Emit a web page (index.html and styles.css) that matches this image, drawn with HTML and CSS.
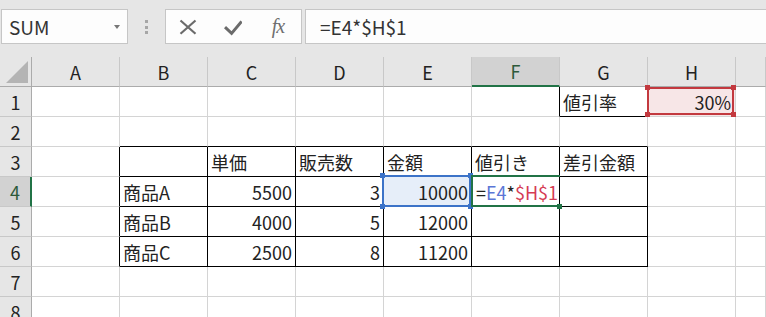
FILE: index.html
```html
<!DOCTYPE html>
<html lang="ja">
<head>
<meta charset="utf-8">
<title>Excel</title>
<link rel="stylesheet" href="styles.css">
</head>
<body>
<div class="toolbar">
  <div class="namebox"><span>SUM</span><span class="caret"></span></div>
  <div class="grip"><i></i><i></i><i></i></div>
  <div class="fxbox">
    <span class="ic"><svg width="18" height="18" viewBox="0 0 18 18"><path d="M1.5 2.5 L16.5 15.8 M16.5 2.5 L1.5 15.8" stroke="#6b6b6b" stroke-width="2.2" fill="none"/></svg></span>
    <span class="ic"><svg width="18" height="18" viewBox="0 0 18 18"><path d="M1 9.2 L7.6 15.4 L17.6 3.4" stroke="#6b6b6b" stroke-width="3" fill="none"/></svg></span>
    <span class="ic fx">fx</span>
  </div>
  <div class="formula">=E4*$H$1</div>
</div>
<div class="sheet">
  <div class="c corner"><svg width="22" height="22" viewBox="0 0 22 22"><polygon points="22,0 22,22 0,22" fill="#b4b4b4"/></svg></div>
  <div class="c ch">A</div><div class="c ch">B</div><div class="c ch">C</div><div class="c ch">D</div><div class="c ch">E</div><div class="c ch act">F</div><div class="c ch">G</div><div class="c ch">H</div><div class="c ch"></div>

  <div class="c rh">1</div>
  <div class="c"></div><div class="c"></div><div class="c"></div><div class="c"></div><div class="c"></div><div class="c tl"></div><div class="c tt">値引率</div>
  <div class="c r hl-red">30%<span class="selH"><i class="q1"></i><i class="q2"></i><i class="q3"></i><i class="q4"></i></span></div><div class="c"></div>

  <div class="c rh">2</div>
  <div class="c"></div><div class="c tt"></div><div class="c tt"></div><div class="c tt"></div><div class="c tt"></div><div class="c tt"></div><div class="c tt"></div><div class="c"></div><div class="c"></div>

  <div class="c rh">3</div>
  <div class="c tl"></div><div class="c t"></div><div class="c t">単価</div><div class="c t">販売数</div><div class="c t">金額</div><div class="c t">値引き</div><div class="c t">差引金額</div><div class="c"></div><div class="c"></div>

  <div class="c rh act">4</div>
  <div class="c tl"></div><div class="c t">商品A</div><div class="c t r">5500</div><div class="c t r">3</div>
  <div class="c t r hl-blue">10000<span class="selE"><i class="q1"></i><i class="q2"></i><i class="q3"></i><i class="q4"></i></span></div>
  <div class="c t edit">=<span class="ref-b">E4</span>*<span class="ref-r">$H$1</span><span class="selF"><i class="qh"></i></span></div>
  <div class="c t"></div><div class="c"></div><div class="c"></div>

  <div class="c rh">5</div>
  <div class="c tl"></div><div class="c t">商品B</div><div class="c t r">4000</div><div class="c t r">5</div><div class="c t r">12000</div><div class="c t"></div><div class="c t"></div><div class="c"></div><div class="c"></div>

  <div class="c rh">6</div>
  <div class="c tl"></div><div class="c t">商品C</div><div class="c t r">2500</div><div class="c t r">8</div><div class="c t r">11200</div><div class="c t"></div><div class="c t"></div><div class="c"></div><div class="c"></div>

  <div class="c rh">7</div>
  <div class="c"></div><div class="c"></div><div class="c"></div><div class="c"></div><div class="c"></div><div class="c"></div><div class="c"></div><div class="c"></div><div class="c"></div>

  <div class="c rh">8</div>
  <div class="c"></div><div class="c"></div><div class="c"></div><div class="c"></div><div class="c"></div><div class="c"></div><div class="c"></div><div class="c"></div><div class="c"></div>
</div>
</body>
</html>
```
FILE: styles.css
```css
* { box-sizing: border-box; }
html, body { margin: 0; height: 100%; overflow: hidden; }
body {
  background: #e6e6e6;
  font-family: "Noto Sans CJK JP", sans-serif;
  color: #222;
}
.toolbar {
  display: flex;
  align-items: flex-start;
  height: 57px;
  padding: 9px 0 0 1px;
}
.namebox {
  width: 127px;
  height: 35px;
  background: #fdfdfd;
  border: 1px solid #c6c6c6;
  display: flex;
  align-items: center;
  justify-content: space-between;
  padding: 0 7px 0 7px;
  font-size: 19px;
  color: #333;
}
.caret {
  width: 0; height: 0;
  border-left: 3.5px solid transparent;
  border-right: 3.5px solid transparent;
  border-top: 4px solid #777;
}
.grip {
  width: 37px;
  display: flex;
  flex-direction: column;
  align-items: center;
  gap: 2.5px;
  padding-top: 11px;
}
.grip i { display: block; width: 3px; height: 3px; background: #a6a6a6; }
.fxbox {
  width: 137px;
  height: 35px;
  background: #fdfdfd;
  border: 1px solid #c6c6c6;
  display: flex;
  align-items: center;
  padding-left: 13px;
  gap: 27px;
}
.ic { width: 18px; height: 18px; display: flex; align-items: center; justify-content: center; }
.fx {
  font-family: "Liberation Serif", serif;
  font-style: italic;
  font-size: 20px;
  color: #6f6f6f;
  letter-spacing: -1px;
}
.formula {
  flex: 1;
  margin-left: 3px;
  height: 35px;
  background: #fdfdfd;
  border: 1px solid #c6c6c6;
  border-right: none;
  padding-left: 14px;
  display: flex;
  align-items: center;
  font-size: 19px;
  color: #333;
}
.sheet {
  display: grid;
  grid-template-columns: 32px repeat(8, 88px) 1fr;
  grid-auto-rows: 30px;
}
.c {
  position: relative;
  background: #fff;
  border-right: 1px solid #d4d4d4;
  border-bottom: 1px solid #d4d4d4;
  padding: 0 3px;
  display: flex;
  align-items: center;
  font-size: 18px;
  white-space: nowrap;
}
.r { justify-content: flex-end; }
.corner {
  background: #e6e6e6;
  border-right-color: #ababab;
  border-bottom-color: #ababab;
  align-items: flex-start;
  padding: 4px 0 0 6px;
}
.ch {
  background: #e6e6e6;
  border-right-color: #c8c8c8;
  border-bottom-color: #ababab;
  justify-content: center;
  font-size: 18px;
}
.rh {
  background: #e6e6e6;
  border-right-color: #ababab;
  border-bottom-color: #c8c8c8;
  justify-content: center;
}
.ch.act {
  background: #d2d2d2;
  border-bottom: 2px solid #217346;
  color: #2d5a3a;
}
.rh.act {
  background: #d2d2d2;
  border-right: 2px solid #217346;
  color: #2d5a3a;
}
.t { border-right-color: #000; border-bottom-color: #000; }
.tl { border-right-color: #000; }
.tt { border-bottom-color: #000; }

.hl-blue { background: #e6eef9; }
.hl-red { background: #f7e6e7; padding-right: 4px; }

.selE, .selF, .selH { position: absolute; pointer-events: none; }
.selE i, .selF i, .selH i { position: absolute; width: 5px; height: 5px; }
.selE {
  left: -2px; right: 0; top: -2px; bottom: -1px;
  border: 2px solid #3c73c8;
  z-index: 2;
}
.selE i { background: #3c73c8; }
.selH {
  left: -1px; right: 1px; top: 0; bottom: 1px;
  border: 2px solid #c3393f;
  z-index: 2;
}
.selH i { background: #c3393f; }
.q1 { left: -4px; top: -4px; }
.q2 { right: -4px; top: -4px; }
.q3 { left: -4px; bottom: -4px; }
.q4 { right: -4px; bottom: -4px; }
.selF {
  left: -1px; right: -1px; top: -2px; bottom: -1px;
  border: 2px solid #217346;
  border-right: none;
  z-index: 3;
}
.selF .qh { right: -2px; bottom: -4px; background: #217346; }
.edit { padding-left: 4px; }
.ref-b { color: #5b76d6; }
.ref-r { color: #d53c54; }
```
